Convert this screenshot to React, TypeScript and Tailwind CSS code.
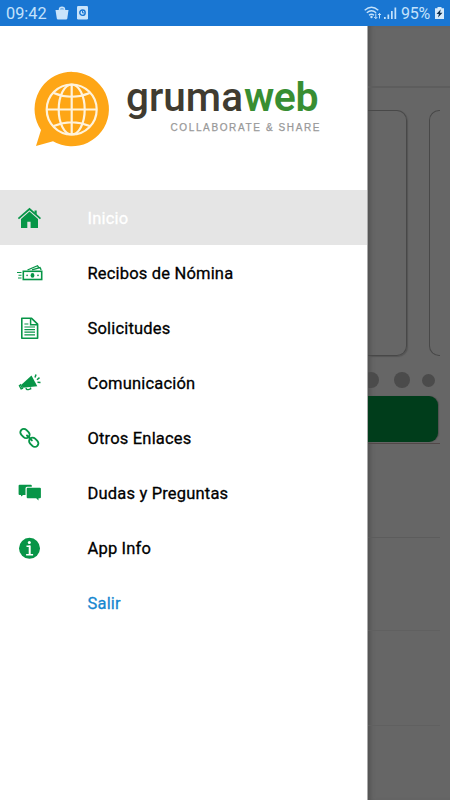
import React from 'react';

const green = '#079547';

function HomeIcon() {
  return (
    <svg width="24" height="24" viewBox="0 0 24 24" fill="none">
      <path d="M1.400 12.600 12.500 3 23.500 12.600" stroke={green} strokeWidth="1.700" />
      <path d="M17.500 4.500h2.200v4.200l-2.200-2z" fill={green} />
      <path d="M12.500 5.600 4 13v9h6.300v-6.300h3.300V22H21v-9z" fill={green} />
    </svg>
  );
}

function MoneyIcon() {
  return (
    <svg width="27" height="24" viewBox="0 0 27 24" fill="none" stroke={green}>
      <rect x="6.300" y="10.300" width="18.400" height="8.200" strokeWidth="1.600" />
      <path d="M0 11.500h4.500M1.500 14.200h3M1 17h3.500" strokeWidth="1.100" />
      <path d="M10.500 9 20.500 4.700l1.300 2M15 8.900l8-2.300 1.200 2.300" strokeWidth="1.300" />
      <ellipse cx="15.500" cy="14.400" rx="1.900" ry="2.300" fill={green} stroke="none" />
      <circle cx="10.100" cy="14.400" r=".8" fill={green} stroke="none" />
      <circle cx="21" cy="14.400" r=".8" fill={green} stroke="none" />
    </svg>
  );
}

function DocumentIcon() {
  return (
    <svg width="24" height="24" viewBox="0 0 24 24" fill="none" stroke={green}>
      <path d="M4.800 2.300h9.800l6 5.800v14.200H4.800z" strokeWidth="1.600" strokeLinejoin="round" />
      <path d="M13.600 2.500v6.200h6.600" strokeWidth="1.500" />
      <path d="M7.400 8h4M7.400 11h10.600M7.400 13.600h10.600M7.400 16.200h10.600M7.400 18.800h10.600" strokeWidth="1.200" />
    </svg>
  );
}

function MegaphoneIcon() {
  return (
    <svg width="24" height="24" viewBox="0 0 24 24" fill="none">
      <path d="M14.500 4.500 20.300 15.200l-14.600 1.500L4.400 13.700z" fill={green} />
      <path d="m3.700 13.800 1.800 3.700-1.400.5-1.700-3.200zM9 16.800c.2 1.400 1 2.200 2.400 1.800l2.300-.7-.3-1.400" stroke={green} strokeWidth="1.300" />
      <path d="m18 6.500 1-3M20 8.700l2.500-2.100M20.500 11.200l3 .2" stroke={green} strokeWidth="1.500" />
    </svg>
  );
}

function LinkIcon() {
  return (
    <svg width="24" height="24" viewBox="0 0 24 24" fill="none" stroke={green}>
      <g transform="rotate(45 12.500 12)">
        <rect x="1" y="8.500" width="10.200" height="7" rx="3.500" strokeWidth="1.900" />
        <rect x="13.400" y="8.500" width="10.200" height="7" rx="3.500" strokeWidth="1.900" />
        <path d="M9 12h6.800" strokeWidth="2" strokeLinecap="round" />
      </g>
    </svg>
  );
}

function ChatIcon() {
  return (
    <svg width="24" height="24" viewBox="0 0 24 24" fill={green}>
      <path d="M2.600 3.800h11.200q1 0 1 1v1H10q-1.500 0-1.500 1.500v6.600H6.200L4 15.600v-1.700H2.600q-1 0-1-1V4.800q0-1 1-1z" />
      <path d="M10.700 6.700h12.200q1 0 1 1v8.500q0 1-1 1H21.500v2.300l-2.300-2.300h-8.500q-1 0-1-1V7.700q0-1 1-1z" />
    </svg>
  );
}

function InfoIcon() {
  return (
    <svg width="24" height="24" viewBox="0 0 24 24">
      <circle cx="12.500" cy="12.300" r="10.500" fill={green} />
      <circle cx="12.300" cy="6.600" r="1.500" fill="white" />
      <path d="M9.500 10.200h3.500M9.100 18.800h7" fill="none" stroke="white" strokeWidth="1.400" />
      <path d="M12.700 9.500v9.500" stroke="white" strokeWidth="2" />
    </svg>
  );
}

const items = [
  { label: 'Inicio', Icon: HomeIcon, row: 'bg-[#e5e5e5] text-white' },
  { label: 'Recibos de Nómina', Icon: MoneyIcon, row: 'text-black' },
  { label: 'Solicitudes', Icon: DocumentIcon, row: 'text-black' },
  { label: 'Comunicación', Icon: MegaphoneIcon, row: 'text-black' },
  { label: 'Otros Enlaces', Icon: LinkIcon, row: 'text-black' },
  { label: 'Dudas y Preguntas', Icon: ChatIcon, row: 'text-black' },
  { label: 'App Info', Icon: InfoIcon, row: 'text-black' },
  { label: 'Salir', Icon: null, row: 'text-[#1687d0]' },
];

function StatusBar() {
  return (
    <header className="flex h-[26px] shrink-0 items-center bg-[#1976d2] pl-1.5 pr-[6px] text-[#c4e2fb]">
      <span className="w-[42px] pt-px text-[16.300px] leading-[26px]">09:42</span>
      <svg className="ml-[7px]" width="14" height="16" viewBox="0 0 14 16">
        <path d="M.5 5h13l-1.200 8.500q-.2 1-1.200 1H3q-1 0-1.200-1z" fill="#c9e4fb" />
        <path d="M3.800 7V4.300a3.200 2.800 0 0 1 6.400 0V7" fill="#c9e4fb" />
        <path d="M4.800 4.500a2.200 1.600 0 0 1 4.400 0" fill="#6eabe5" />
      </svg>
      <svg className="ml-2" width="11" height="14" viewBox="0 0 11 14">
        <rect width="11" height="13.500" rx="1.200" fill="#c9e4fb" />
        <circle cx="5.500" cy="6.700" r="2.700" fill="none" stroke="#1976d2" strokeWidth="1.400" />
        <path d="M5.500 4.700v2.200h1.800" fill="none" stroke="#1976d2" />
      </svg>
      <svg className="ml-auto" width="18" height="14" viewBox="0 0 18 14" fill="none" stroke="#c4e2fb" strokeWidth="1.400">
        <path d="M.7 4.300q6.800-6 13.600 0M2.800 6.800q4.700-4 9.300 0M5 9.200q2.500-2 5 0" />
        <circle cx="7.500" cy="11" r="1.200" fill="#c4e2fb" stroke="none" />
        <path d="M11.800 7.500v5M10.200 11l1.600 1.700 1.500-1.700M15.500 12.500v-5M14 9l1.500-1.600L17 9" strokeWidth="1" />
      </svg>
      <svg className="ml-[2px]" width="13" height="13" viewBox="0 0 13 13" fill="#c4e2fb">
        <path d="M0 10h1.700v2H0zM3.500 7.500h1.700V12H3.500zM7 4h1.700v8H7zM10.500 .5h1.700V12h-1.700z" />
      </svg>
      <span className="ml-1 w-[31px] whitespace-nowrap pt-px text-[16px] leading-[26px] tracking-[-0.200px]">95%</span>
      <svg className="ml-[3px]" width="9" height="13" viewBox="0 0 9 13">
        <path d="M2.500 0h4v1.200H9V12H0V1.200h2.500z" fill="#d5eafb" />
        <path d="M5.800 2.300 1.500 7h2.400L3 10.500l4.500-4.800H5z" fill="#103050" />
      </svg>
    </header>
  );
}

function Logo() {
  return (
    <svg width="368" height="164" viewBox="0 26 368 164" role="img" aria-label="grumaweb">
      <path d="M36 146 41 130A37.200 37.200 0 1 1 53 141.200Z" fill="#fea616" />
      <g fill="none" stroke="#fff3dc" strokeWidth="2.200">
        <circle cx="71.700" cy="109.500" r="25" />
        <ellipse cx="71.700" cy="109.500" rx="13" ry="25" />
        <path d="M71.700 84.500v50M46.700 109.500h50M53.700 93q18 7.500 36 0M53.700 126q18-7.500 36 0" />
      </g>
      <text x="126" y="111.300" fontFamily="Roboto, sans-serif" fontSize="40.500" fontWeight="500" textLength="117" fill="#403b30">gruma</text>
      <text x="244" y="111.300" fontFamily="Roboto, sans-serif" fontSize="41" fontWeight="600" textLength="74.500" fill="#388e32">web</text>
      <text x="170.500" y="130.900" fontFamily="Liberation Sans, Arial, sans-serif" fontSize="10" textLength="149" fill="#999" stroke="#999" strokeWidth=".25">COLLABORATE &amp; SHARE</text>
    </svg>
  );
}

function Backdrop() {
  return (
    <main className="flex min-w-0 flex-1 flex-col overflow-hidden bg-[#666] shadow-[inset_5px_0_5px_-3px_#505050]">
      <div className="h-[62px] shrink-0 border-b-2 border-[#5d5d5d]" />
      <div className="mt-[22px] flex h-[246px] shrink-0 gap-[22px]">
        <div className="w-[39px] rounded-r-[10px] border border-l-0 border-[#484848] shadow-[1px_1px_1px_#555]" />
        <div className="w-[11px] rounded-l-[10px] border border-r-0 border-[#484848]" />
      </div>
      <div className="mt-4 flex h-4 shrink-0 items-center">
        <div className="-ml-[5px] size-4 rounded-full bg-[#4b4b4b]" />
        <div className="ml-[15px] size-4 rounded-full bg-[#4b4b4b]" />
        <div className="ml-3 size-[13px] rounded-full bg-[#4b4b4b]" />
      </div>
      <div className="mr-[10px] mt-[8px] h-[48px] shrink-0 border-b border-[#514848]">
        <div className="mr-[2px] h-[46px] rounded-r-[9px] bg-[#003d1b] shadow-[1px_0_1px_#505050]" />
      </div>
      <div className="mr-[10px] h-[94px] shrink-0 border-b border-[#5c5c5c]" />
      <div className="mr-[10px] h-[93px] shrink-0 border-b border-[#606060]" />
      <div className="mr-[10px] h-[95px] shrink-0 border-b border-[#606060]" />
    </main>
  );
}

export default function App() {
  return (
    <div className="flex h-[800px] w-[450px] flex-col overflow-hidden bg-white font-['Roboto',sans-serif]">
      <StatusBar />
      <div className="flex min-h-0 flex-1">
        <aside className="w-[368px] shrink-0 border-r border-[#aaa] bg-white">
          <div className="h-[164px] overflow-hidden">
            <Logo />
          </div>
          <nav>
            {items.map(({ label, Icon, row }) => (
              <a key={label} className={`flex h-[55px] items-center pl-[17px] ${row}`}>
                <span className="flex w-[70.500px] shrink-0">{Icon && <Icon />}</span>
                <span className="whitespace-nowrap pt-[3px] text-[16.500px] font-normal leading-5 tracking-[0.180px] [-webkit-text-stroke:0.300px_currentColor]">{label}</span>
              </a>
            ))}
          </nav>
        </aside>
        <Backdrop />
      </div>
    </div>
  );
}
